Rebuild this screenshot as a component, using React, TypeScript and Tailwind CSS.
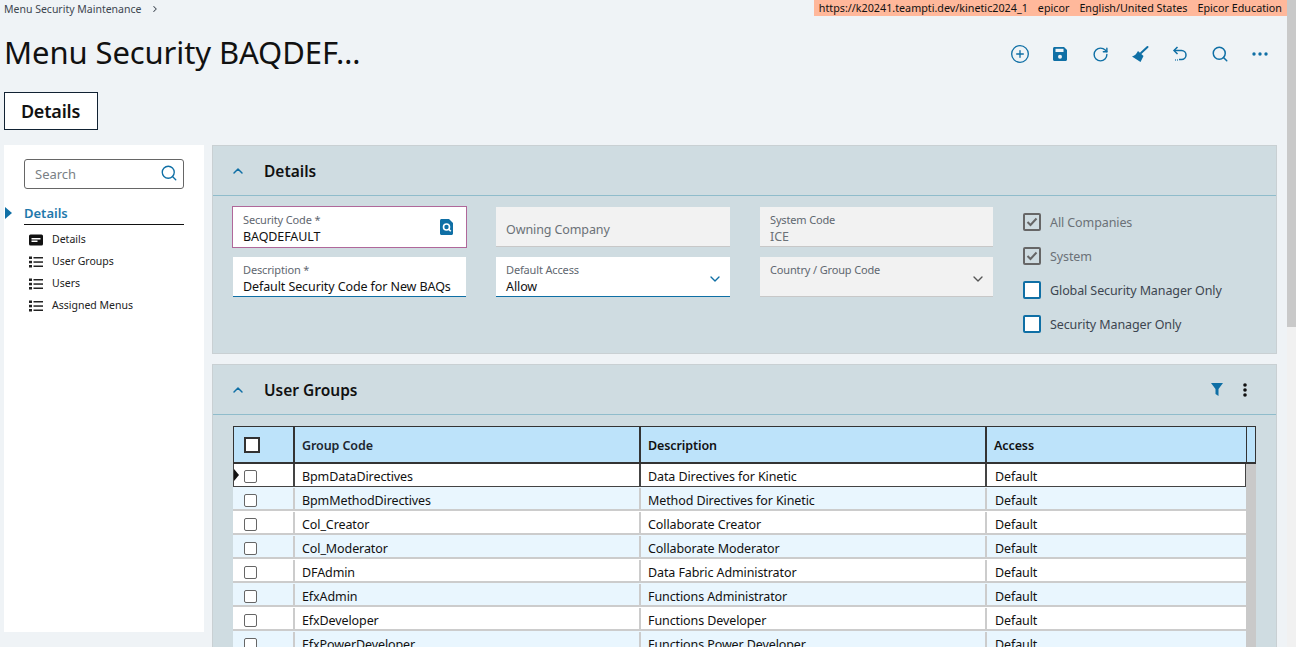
import { ChevronDown, ChevronRight, ChevronUp, CirclePlus, RotateCw, Search } from "lucide-react";

const font = "font-['Noto_Sans','Open_Sans',sans-serif]";

const rows = [
  ["BpmDataDirectives", "Data Directives for Kinetic"],
  ["BpmMethodDirectives", "Method Directives for Kinetic"],
  ["Col_Creator", "Collaborate Creator"],
  ["Col_Moderator", "Collaborate Moderator"],
  ["DFAdmin", "Data Fabric Administrator"],
  ["EfxAdmin", "Functions Administrator"],
  ["EfxDeveloper", "Functions Developer"],
  ["EfxPowerDeveloper", "Functions Power Developer"],
];

function SaveIcon() {
  return (
    <svg width="16" height="16" viewBox="0 0 16 16">
      <path d="M1 2.500C1 1.700 1.700 1 2.500 1H12l3 3v9.500c0 .8-.7 1.500-1.500 1.500h-11C1.700 15 1 14.300 1 13.500z" fill="#0f6fa5" />
      <rect x="3.500" y="2.800" width="8" height="3.200" fill="#eff3f6" />
      <circle cx="8" cy="10.800" r="2" fill="#eff3f6" />
    </svg>
  );
}

function BroomIcon() {
  return (
    <svg width="18" height="18" viewBox="0 0 18 18">
      <path d="M10 8 16.500 2" stroke="#0f6fa5" strokeWidth="2" strokeLinecap="round" />
      <path d="M7 6 12.500 11 9.500 17 1 11.500C3.500 11 5.500 9 7 6z" fill="#0f6fa5" />
    </svg>
  );
}

function UndoIcon() {
  return (
    <svg width="18" height="18" viewBox="0 0 18 18" fill="none" stroke="#0f6fa5" strokeWidth="1.500">
      <path d="M6.500 2 3 5.500 6.500 9" />
      <path d="M3 5.500h7.500a4.300 4.300 0 0 1 0 9H8" />
      <path d="M4 15h.8M6 15h.8" />
    </svg>
  );
}

function MoreH() {
  return (
    <svg width="16" height="6" viewBox="0 0 16 6" fill="#0f6fa5">
      <circle cx="2" cy="3" r="1.700" />
      <circle cx="8" cy="3" r="1.700" />
      <circle cx="14" cy="3" r="1.700" />
    </svg>
  );
}

function ListIcon() {
  return (
    <svg width="14" height="12" viewBox="0 0 14 12" fill="#222">
      <rect x="0" y="0.500" width="3" height="2.500" />
      <rect x="0" y="4.800" width="3" height="2.500" />
      <rect x="0" y="9" width="3" height="2.500" />
      <rect x="4.500" y="1" width="9.500" height="1.500" />
      <rect x="4.500" y="5.300" width="9.500" height="1.500" />
      <rect x="4.500" y="9.500" width="9.500" height="1.500" />
    </svg>
  );
}

function CardIcon() {
  return (
    <svg width="14" height="12" viewBox="0 0 14 12">
      <rect x="0" y="0.500" width="14" height="11" rx="1.500" fill="#111" />
      <rect x="2.500" y="4" width="9" height="1.500" fill="#fff" />
      <rect x="2.500" y="6.500" width="6" height="1.500" fill="#fff" />
    </svg>
  );
}

function LookupIcon() {
  return (
    <svg width="13" height="16" viewBox="0 0 13 16">
      <path d="M0 1.500C0 .7.700 0 1.500 0H9l4 4v10.500c0 .8-.7 1.500-1.500 1.500h-10C.7 16 0 15.300 0 14.500z" fill="#0f6fa5" />
      <circle cx="6.500" cy="8" r="3" fill="none" stroke="#fff" strokeWidth="1.600" />
      <path d="M8.700 10.200 10.800 12.300" stroke="#fff" strokeWidth="1.600" />
    </svg>
  );
}

function Field({ label, value, pink, gray, arrow, lookup, className = "" }: { label: string; value?: string; pink?: boolean; gray?: boolean; arrow?: boolean; lookup?: boolean; className?: string }) {
  const box = pink
    ? "-m-[1px] h-[42px] border border-[#b0689a] bg-white"
    : gray
      ? "h-10 border-b border-[#c8c8c8] bg-[#f2f2f2]"
      : "h-10 border-b border-[#0f6fa5] bg-white";
  return (
    <div className={`relative whitespace-nowrap pl-[10px] pt-[5px] ${box} ${className}`}>
      <div className="text-[11px] leading-[15px] tracking-[-0.15px] text-[#5f6770]">{label}</div>
      <div className={`pt-[1px] text-[12.5px] leading-[17px] tracking-[-0.1px] ${gray ? "text-[#6b7177]" : "text-[#111]"}`}>{value}</div>
      {lookup && (
        <span className="absolute right-[13px] top-[12px]">
          <LookupIcon />
        </span>
      )}
      {arrow && (
        <ChevronDown size={16} className={`absolute right-[7px] top-[14px] ${gray ? "text-[#555]" : "text-[#0f6fa5]"}`} />
      )}
    </div>
  );
}

function Check({ label, checked }: { label: string; checked?: boolean }) {
  return (
    <div className="flex h-[18px] items-center gap-[9px]">
      <div className={`flex h-[18px] w-[18px] items-center justify-center rounded-[2px] border-2 ${checked ? "border-[#666] bg-transparent" : "border-[#0f6fa5] bg-white"}`}>
        {checked && (
          <svg width="12" height="10" viewBox="0 0 12 10" fill="none" stroke="#666" strokeWidth="2">
            <path d="M1.500 5 4.500 8 10.500 1.500" />
          </svg>
        )}
      </div>
      <span className={`pt-[2px] text-[12.5px] tracking-[-0.1px] ${checked ? "text-[#6b7177]" : "text-[#3d4650]"}`}>{label}</span>
    </div>
  );
}

function PanelHeader({ title, actions }: { title: string; actions?: boolean }) {
  return (
    <div className="flex h-[50px] items-center border-b border-[#8fbccb] pl-[17px] pr-[29px]">
      <ChevronUp size={16} strokeWidth={2.2} className="text-[#0f6fa5]" />
      <span className="ml-[18px] pt-[2px] text-[15.5px] font-semibold text-[#111]">{title}</span>
      {actions && (
        <div className="ml-auto flex items-center gap-[20px]">
          <svg width="12" height="13" viewBox="0 0 12 13" fill="#0f6fa5">
            <path d="M0 0h12L7.500 6v7L4.500 11V6z" />
          </svg>
          <svg width="4" height="14" viewBox="0 0 4 14" fill="#111">
            <circle cx="2" cy="2" r="1.800" />
            <circle cx="2" cy="7" r="1.800" />
            <circle cx="2" cy="12" r="1.800" />
          </svg>
        </div>
      )}
    </div>
  );
}

export default function App() {
  return (
    <div className={`flex h-[647px] w-[1296px] overflow-hidden bg-[#eff3f6] ${font}`}>
      <div className="w-[1287px] shrink-0">
        {/* top line */}
        <div className="flex h-4 items-start justify-between">
          <div className="flex items-center gap-[9px] pl-1 pt-[1px] text-[10.5px] leading-[16px] text-[#3d4650]">
            Menu Security Maintenance
            <ChevronRight size={10} strokeWidth={2.5} />
          </div>
          <div className="flex h-4 items-center gap-[10px] bg-[#ffb89b] px-[5px] text-[10.75px] leading-[16px] text-[#111]">
            <span>https://k20241.teampti.dev/kinetic2024_1</span>
            <span>epicor</span>
            <span>English/United States</span>
            <span>Epicor Education</span>
          </div>
        </div>

        {/* title and toolbar */}
        <div className="flex h-[76px] items-center pl-1 pr-[7px]">
          <h1 className="mb-[4px] text-[31px] font-normal leading-[40px] tracking-[-0.1px] text-[#111]">Menu Security BAQDEF…</h1>
          <div className="ml-auto flex items-center text-[#0f6fa5]">
            <span className="flex w-10 justify-center"><CirclePlus size={20} strokeWidth={1.600} /></span>
            <span className="flex w-10 justify-center"><SaveIcon /></span>
            <span className="flex w-10 justify-center"><RotateCw size={17} strokeWidth={2} /></span>
            <span className="flex w-10 justify-center"><BroomIcon /></span>
            <span className="flex w-10 justify-center"><UndoIcon /></span>
            <span className="flex w-10 justify-center"><Search size={18} strokeWidth={2} /></span>
            <span className="flex w-10 justify-center"><MoreH /></span>
          </div>
        </div>

        {/* tab */}
        <div className="pl-1">
          <div className="flex h-[38px] w-[94px] items-center justify-center border border-[#123] bg-white pr-[1px] text-[18px] font-semibold tracking-[-0.2px] text-[#111]">
            Details
          </div>
        </div>

        <div className="mt-[15px] flex gap-2 pl-1">
          {/* side nav */}
          <div className="h-[487px] w-[200px] shrink-0 bg-white px-5 pt-[14px]">
            <div className="flex h-[30px] items-center justify-between rounded-[3px] border border-[#666] pl-[10px] pr-[5px]">
              <span className="pt-[1px] text-[13px] text-[#7a7f85]">Search</span>
              <Search size={18} strokeWidth={1.800} className="mb-[2px] text-[#0f6fa5]" />
            </div>
            <div className="relative mt-[15px] border-b border-[#111] pb-[2px] text-[13px] font-semibold leading-[18px] text-[#1f78ab]">
              <span className="absolute left-[-19px] top-[3px] h-0 w-0 border-y-[6px] border-l-[7px] border-y-transparent border-l-[#0f6fa5]" />
              Details
            </div>
            <div className="mt-[4px] flex flex-col pl-[5px]">
              {["Details", "User Groups", "Users", "Assigned Menus"].map((item, i) => (
                <div key={item} className="flex h-[22px] items-center gap-[9px] text-[10.5px] text-[#222]">
                  {i === 0 ? <CardIcon /> : <ListIcon />}
                  {item}
                </div>
              ))}
            </div>
          </div>

          {/* panels */}
          <div className="w-[1065px] shrink-0">
            <div className="h-[209px] border border-[#c9d0d3] bg-[#cfdce1]">
              <PanelHeader title="Details" />
              <div className="flex items-start pl-5 pt-[11px]">
                <div className="grid grid-cols-[263px_264px_233px] gap-y-[10px]">
                  <Field label="Security Code *" value="BAQDEFAULT" pink lookup className="mr-[29px]" />
                  <div className="mr-[30px] flex h-10 items-center border-b border-[#c8c8c8] bg-[#f2f2f2] px-[10px] pt-[7px] text-[12.5px] tracking-[-0.1px] text-[#6b7177]">
                    Owning Company
                  </div>
                  <Field label="System Code" value="ICE" gray />
                  <Field label="Description *" value="Default Security Code for New BAQs" className="mr-[30px]" />
                  <Field label="Default Access" value="Allow" arrow className="mr-[30px]" />
                  <Field label="Country / Group Code" gray arrow />
                </div>
                <div className="ml-[30px] flex flex-col gap-4 pt-[6px]">
                  <Check label="All Companies" checked />
                  <Check label="System" checked />
                  <Check label="Global Security Manager Only" />
                  <Check label="Security Manager Only" />
                </div>
              </div>
            </div>

            <div className="mt-[10px] h-[400px] border border-[#c9d0d3] bg-[#cfdce1]">
              <PanelHeader title="User Groups" actions />
              <div className="mx-5 mt-[11px] w-[1023px] text-[12.5px] tracking-[-0.1px] text-[#111]">
                <div className="grid h-[38px] grid-cols-[61px_346px_346px_260px_10px] border border-b-2 border-[#333] bg-[#bde3fa] font-semibold">
                  <div className="flex items-center border-r-2 border-[#333] pl-[10px]">
                    <span className="h-4 w-4 border-2 border-[#333] bg-white" />
                  </div>
                  <div className="flex items-center border-r-2 border-[#333] pl-[7px] pt-[4px] text-[#1d2730]">Group Code</div>
                  <div className="flex items-center border-r-2 border-[#333] pl-[7px] pt-[4px]">Description</div>
                  <div className="flex items-center border-r border-[#333] pl-[7px] pt-[4px]">Access</div>
                  <div />
                </div>
                <div className="flex">
                  <div className="w-[1013px]">
                    {rows.map(([code, desc], i) => {
                      const sep = i === 0 ? "border-[#444] pt-[4px]" : "border-[#ccc] pt-[4px]";
                      return (
                        <div
                          key={code}
                          className={`grid grid-cols-[61px_346px_346px_260px] whitespace-nowrap ${i === 0 ? "h-[23px] border-x border-b border-[#444] bg-white" : i % 2 ? "h-6 border-b-2 border-[#ccc] bg-[#e9f6fe] pl-[1px] pt-[1px]" : "h-6 border-b-2 border-[#ccc] bg-white pl-[1px] pt-[1px]"}`}
                        >
                          <div className={`relative flex items-center border-r-2 pl-[10px] ${i === 0 ? "border-[#444] pt-[2px]" : "border-[#ccc] pt-[2px]"}`}>
                            {i === 0 && <span className="absolute left-0 top-[5px] h-0 w-0 border-y-[6px] border-l-[5px] border-y-transparent border-l-[#111]" />}
                            <span className="h-[13px] w-[13px] rounded-[2px] border border-[#666] bg-white" />
                          </div>
                          <div className={`flex items-center border-r-2 pl-[7px] ${sep}`}>{code}</div>
                          <div className={`flex items-center border-r-2 pl-[7px] ${sep}`}>{desc}</div>
                          <div className="flex items-center pl-[8px] pt-[4px]">Default</div>
                        </div>
                      );
                    })}
                  </div>
                  <div className="w-[10px] bg-[#c9c9c9]" />
                </div>
              </div>
            </div>
          </div>
        </div>
      </div>

      {/* page scrollbar */}
      <div className="h-full w-[9px] bg-[#f1f1f1]">
        <div className="h-[327px] bg-[#c9c9c9]" />
      </div>
    </div>
  );
}
